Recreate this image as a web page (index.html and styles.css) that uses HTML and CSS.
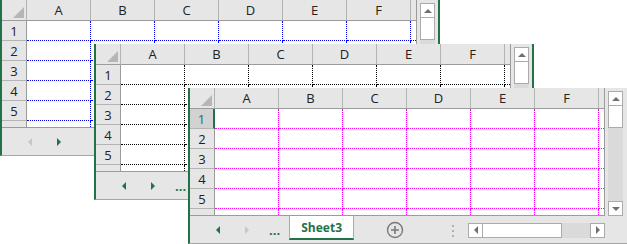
FILE: index.html
```html
<!DOCTYPE html>
<html lang="en">
<head>
    <meta charset="UTF-8">
    <title>Workbook windows</title>
    <link rel="stylesheet" href="styles.css">
</head>
<body>
    <div class="desktop">

        <!-- window 1 : blue gridlines -->
        <div class="window window-one">
            <div class="main">
                <div class="sheet">
                    <div class="corner"></div>
                    <div class="col-head">A</div><div class="col-head">B</div><div class="col-head">C</div>
                    <div class="col-head">D</div><div class="col-head">E</div><div class="col-head">F</div>
                    <div class="col-head edge"></div>

                    <div class="row-head">1</div>
                    <div class="cell"></div><div class="cell"></div><div class="cell"></div><div class="cell"></div><div class="cell"></div><div class="cell"></div><div class="cell edge"></div>
                    <div class="row-head">2</div>
                    <div class="cell"></div><div class="cell"></div><div class="cell"></div><div class="cell"></div><div class="cell"></div><div class="cell"></div><div class="cell edge"></div>
                    <div class="row-head">3</div>
                    <div class="cell"></div><div class="cell"></div><div class="cell"></div><div class="cell"></div><div class="cell"></div><div class="cell"></div><div class="cell edge"></div>
                    <div class="row-head">4</div>
                    <div class="cell"></div><div class="cell"></div><div class="cell"></div><div class="cell"></div><div class="cell"></div><div class="cell"></div><div class="cell edge"></div>
                    <div class="row-head">5</div>
                    <div class="cell"></div><div class="cell"></div><div class="cell"></div><div class="cell"></div><div class="cell"></div><div class="cell"></div><div class="cell edge"></div>
                    <div class="row-head tail"></div>
                    <div class="cell tail"></div><div class="cell tail"></div><div class="cell tail"></div><div class="cell tail"></div><div class="cell tail"></div><div class="cell tail"></div><div class="cell edge tail"></div>
                </div>
                <div class="vscroll">
                    <div class="sb-btn"><span class="arrow-up"></span></div>
                    <div class="sb-thumb"></div>
                    <div class="sb-track"></div>
                    <div class="sb-btn"><span class="arrow-down"></span></div>
                </div>
            </div>
            <div class="tabbar">
                <span class="nav-prev disabled"></span>
                <span class="nav-next"></span>
                <div class="sheet-tab far">Sheet1</div>
            </div>
        </div>

        <!-- window 2 : black gridlines -->
        <div class="window window-two">
            <div class="main">
                <div class="sheet">
                    <div class="corner"></div>
                    <div class="col-head">A</div><div class="col-head">B</div><div class="col-head">C</div>
                    <div class="col-head">D</div><div class="col-head">E</div><div class="col-head">F</div>
                    <div class="col-head edge"></div>

                    <div class="row-head">1</div>
                    <div class="cell"></div><div class="cell"></div><div class="cell"></div><div class="cell"></div><div class="cell"></div><div class="cell"></div><div class="cell edge"></div>
                    <div class="row-head">2</div>
                    <div class="cell"></div><div class="cell"></div><div class="cell"></div><div class="cell"></div><div class="cell"></div><div class="cell"></div><div class="cell edge"></div>
                    <div class="row-head">3</div>
                    <div class="cell"></div><div class="cell"></div><div class="cell"></div><div class="cell"></div><div class="cell"></div><div class="cell"></div><div class="cell edge"></div>
                    <div class="row-head">4</div>
                    <div class="cell"></div><div class="cell"></div><div class="cell"></div><div class="cell"></div><div class="cell"></div><div class="cell"></div><div class="cell edge"></div>
                    <div class="row-head">5</div>
                    <div class="cell"></div><div class="cell"></div><div class="cell"></div><div class="cell"></div><div class="cell"></div><div class="cell"></div><div class="cell edge"></div>
                    <div class="row-head tail"></div>
                    <div class="cell tail"></div><div class="cell tail"></div><div class="cell tail"></div><div class="cell tail"></div><div class="cell tail"></div><div class="cell tail"></div><div class="cell edge tail"></div>
                </div>
                <div class="vscroll">
                    <div class="sb-btn"><span class="arrow-up"></span></div>
                    <div class="sb-thumb"></div>
                    <div class="sb-track"></div>
                    <div class="sb-btn"><span class="arrow-down"></span></div>
                </div>
            </div>
            <div class="tabbar">
                <span class="nav-prev"></span>
                <span class="nav-next"></span>
                <span class="more">...</span>
                <div class="sheet-tab">Sheet2</div>
            </div>
        </div>

        <!-- window 3 : magenta gridlines, active -->
        <div class="window window-three">
            <div class="main">
                <div class="sheet">
                    <div class="corner"></div>
                    <div class="col-head">A</div><div class="col-head">B</div><div class="col-head">C</div>
                    <div class="col-head">D</div><div class="col-head">E</div><div class="col-head">F</div>
                    <div class="col-head edge"></div>

                    <div class="row-head selected">1</div>
                    <div class="cell"></div><div class="cell"></div><div class="cell"></div><div class="cell"></div><div class="cell"></div><div class="cell"></div><div class="cell edge"></div>
                    <div class="row-head">2</div>
                    <div class="cell"></div><div class="cell"></div><div class="cell"></div><div class="cell"></div><div class="cell"></div><div class="cell"></div><div class="cell edge"></div>
                    <div class="row-head">3</div>
                    <div class="cell"></div><div class="cell"></div><div class="cell"></div><div class="cell"></div><div class="cell"></div><div class="cell"></div><div class="cell edge"></div>
                    <div class="row-head">4</div>
                    <div class="cell"></div><div class="cell"></div><div class="cell"></div><div class="cell"></div><div class="cell"></div><div class="cell"></div><div class="cell edge"></div>
                    <div class="row-head">5</div>
                    <div class="cell"></div><div class="cell"></div><div class="cell"></div><div class="cell"></div><div class="cell"></div><div class="cell"></div><div class="cell edge"></div>
                    <div class="row-head tail"></div>
                    <div class="cell tail"></div><div class="cell tail"></div><div class="cell tail"></div><div class="cell tail"></div><div class="cell tail"></div><div class="cell tail"></div><div class="cell edge tail"></div>
                </div>
                <div class="vscroll">
                    <div class="sb-btn"><span class="arrow-up"></span></div>
                    <div class="sb-thumb"></div>
                    <div class="sb-track"></div>
                    <div class="sb-btn"><span class="arrow-down"></span></div>
                </div>
            </div>
            <div class="tabbar">
                <span class="nav-prev"></span>
                <span class="nav-next disabled"></span>
                <span class="more">...</span>
                <div class="sheet-tab">Sheet3</div>
                <span class="add-sheet">
                    <svg width="18" height="18" viewBox="0 0 18 18">
                        <circle cx="9" cy="9" r="7.5" fill="none" stroke="#7a7a7a" stroke-width="1.4"/>
                        <path d="M9 5v8M5 9h8" stroke="#7a7a7a" stroke-width="1.6"/>
                    </svg>
                </span>
                <span class="grip"><i></i><i></i><i></i></span>
                <div class="hscroll">
                    <div class="sb-btn"><span class="arrow-left"></span></div>
                    <div class="sb-thumb"></div>
                    <div class="sb-track"></div>
                    <div class="sb-btn"><span class="arrow-right"></span></div>
                </div>
            </div>
        </div>

    </div>
</body>
</html>
```

FILE: styles.css
```css
 *{
     margin: 0;
     padding: 0;
     box-sizing: border-box;
 }

 body{
     font-family: 'Open Sans', 'Noto Sans', Arial, sans-serif;
     background: #fff;
 }

 .desktop{
     position: relative;
     width: 627px;
     height: 244px;
     overflow: hidden;
 }

 /* workbook windows sit on a free canvas */
 .window{
     position: absolute;
     width: 440px;
     height: 156px;
     background: #e6e6e6;
     border-left: 2px solid #217346;
     border-right: 2px solid #217346;
     border-bottom: 1px solid #a6a6a6;
     display: flex;
     flex-direction: column;
 }

 .window-one{ left: 0; top: 0; }
 .window-two{ left: 94px; top: 44px; }
 .window-three{ left: 188px; top: 88px; width: 442px; }

 .main{
     display: flex;
     height: 128px;
 }

 .sheet{
     display: grid;
     grid-template-columns: 25px repeat(6, 64px) 5px;
     grid-template-rows: 21px repeat(5, 20px) 6px;
     width: 415px;
     height: 128px;
     background: #fff;
     border-right: 1px solid #9b9b9b;
     border-bottom: 1px solid #9b9b9b;
 }

 .corner{
     background: #e6e6e6;
     border-right: 1px solid #b4b4b4;
     border-bottom: 1px solid #9b9b9b;
     display: flex;
     align-items: flex-end;
     justify-content: flex-end;
     padding: 0 2px 2px 0;
 }

 .corner::after{
     content: "";
     border-left: 11px solid transparent;
     border-bottom: 11px solid #b6b6b6;
 }

 .col-head,
 .row-head{
     background: #e6e6e6;
     display: flex;
     align-items: center;
     justify-content: center;
     font-size: 13px;
     color: #222;
 }

 .col-head{
     border-right: 1px solid #b4b4b4;
     border-bottom: 1px solid #9b9b9b;
 }

 .col-head.edge{
     border-right: none;
 }

 .row-head{
     border-right: 1px solid #9b9b9b;
     border-bottom: 1px solid #b4b4b4;
 }

 .row-head.tail{
     border-bottom: none;
 }

 .row-head.selected{
     background: #d2d2d2;
     color: #217346;
     border-right: 2px solid #217346;
 }

 .cell{
     border-right: 1px dotted;
     border-bottom: 1px dotted;
 }

 .cell.edge{ border-right: none; }
 .cell.tail{ border-bottom: none; }

 .window-one .cell{ border-color: #0000ff; }
 .window-two .cell{ border-color: #000; }
 .window-three .cell{ border-color: #ff00ff; }

 /* scrollbars */
 .vscroll{
     display: flex;
     flex-direction: column;
     width: 15px;
     margin: 3px 0 0 3px;
 }

 .sb-btn{
     background: #fff;
     border: 1px solid #ababab;
     display: flex;
     align-items: center;
     justify-content: center;
     flex-shrink: 0;
 }

 .sb-thumb{
     background: #fff;
     border: 1px solid #ababab;
     flex-shrink: 0;
 }

 .sb-track{
     flex: 1;
     background: #dadada;
 }

 .vscroll .sb-btn{ height: 15px; }
 .vscroll .sb-thumb{ height: 23px; margin-top: -1px; }

 .arrow-up{
     border-left: 4px solid transparent;
     border-right: 4px solid transparent;
     border-bottom: 4px solid #707070;
 }

 .arrow-down{
     border-left: 4px solid transparent;
     border-right: 4px solid transparent;
     border-top: 4px solid #707070;
 }

 .arrow-left{
     border-top: 4px solid transparent;
     border-bottom: 4px solid transparent;
     border-right: 4px solid #707070;
 }

 .arrow-right{
     border-top: 4px solid transparent;
     border-bottom: 4px solid transparent;
     border-left: 4px solid #707070;
 }

 /* sheet tab bar */
 .tabbar{
     display: flex;
     align-items: center;
     height: 27px;
 }

 .nav-prev{
     margin-left: 26px;
     border-top: 4px solid transparent;
     border-bottom: 4px solid transparent;
     border-right: 4px solid #217346;
 }

 .nav-next{
     margin-left: 25px;
     border-top: 4px solid transparent;
     border-bottom: 4px solid transparent;
     border-left: 4px solid #217346;
 }

 .nav-prev.disabled{ border-right-color: #c6c6c6; }
 .nav-next.disabled{ border-left-color: #c6c6c6; }

 .more{
     margin-left: 20px;
     color: #217346;
     font-weight: 700;
     font-size: 13px;
     line-height: 1;
     padding-top: 2px;
 }

 .sheet-tab{
     align-self: flex-start;
     margin-left: 9px;
     width: 65px;
     height: 24px;
     background: #fff;
     border-left: 1px solid #ababab;
     border-right: 1px solid #ababab;
     border-bottom: 2px solid #217346;
     color: #217346;
     font-weight: 700;
     font-size: 12px;
     display: flex;
     align-items: center;
     justify-content: center;
 }

 .sheet-tab.far{
     margin-left: 60px;
 }

 .add-sheet{
     display: flex;
     margin-left: 32px;
 }

 .grip{
     display: flex;
     flex-direction: column;
     gap: 3px;
     margin-left: 48px;
     padding-top: 2px;
 }

 .grip i{
     display: block;
     width: 2px;
     height: 2px;
     background: #b0b0b0;
 }

 .hscroll{
     display: flex;
     width: 137px;
     height: 15px;
     margin-left: 14px;
     margin-top: 1px;
 }

 .hscroll .sb-btn{ width: 15px; }
 .hscroll .sb-thumb{ width: 80px; margin-left: -1px; }
 .hscroll .sb-track{ flex: 1; }
```
